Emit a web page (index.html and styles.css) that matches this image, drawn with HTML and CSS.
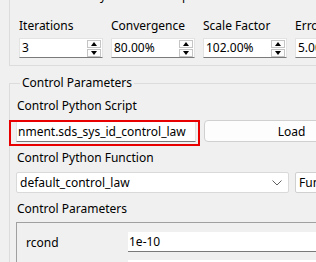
FILE: index.html
```html
<!DOCTYPE html>
<html lang="en">
<head>
    <meta charset="UTF-8">
    <title>Control Parameters</title>
    <link rel="stylesheet" href="styles.css">
</head>
<body>
    <div class="page">
        <fieldset class="group batch">
            <legend>Batch of Delayed Lines Computation</legend>
            <div class="spin-row">
                <div class="field">
                    <div class="label">Iterations</div>
                    <div class="spin"><span class="spin-value">3</span><span class="spin-btns"><span class="arrow up"></span><span class="arrow down"></span></span></div>
                </div>
                <div class="field">
                    <div class="label">Convergence</div>
                    <div class="spin"><span class="spin-value">80.00%</span><span class="spin-btns"><span class="arrow up"></span><span class="arrow down"></span></span></div>
                </div>
                <div class="field">
                    <div class="label">Scale Factor</div>
                    <div class="spin"><span class="spin-value">102.00%</span><span class="spin-btns"><span class="arrow up"></span><span class="arrow down"></span></span></div>
                </div>
                <div class="field">
                    <div class="label">Error Tolerance</div>
                    <div class="spin"><span class="spin-value">5.00%</span><span class="spin-btns"><span class="arrow up"></span><span class="arrow down"></span></span></div>
                </div>
            </div>
        </fieldset>

        <fieldset class="group control">
            <legend>Control Parameters</legend>

            <div class="label">Control Python Script</div>
            <div class="row">
                <div class="edit script-edit">
                    <span class="edit-text">nment.sds_sys_id_control_law</span>
                    <div class="highlight"></div>
                </div>
                <button class="btn load">Load</button>
            </div>

            <div class="label">Control Python Function</div>
            <div class="row combo-row">
                <div class="combo">
                    <span>default_control_law</span>
                    <svg class="chevron" width="10" height="6" viewBox="0 0 10 6"><polyline points="0.5,0.5 5,5 9.5,0.5" fill="none" stroke="#606060" stroke-width="1"/></svg>
                </div>
                <button class="btn fun">Function</button>
            </div>

            <div class="label">Control Parameters</div>
            <div class="param-frame">
                <div class="param">
                    <span class="param-name">rcond</span>
                    <div class="param-edit">1e-10</div>
                </div>
                <div class="param">
                    <span class="param-name">&nbsp;</span>
                    <div class="param-edit"></div>
                </div>
            </div>
        </fieldset>
    </div>
</body>
</html>
```

FILE: styles.css
```css
html, body {
    margin: 0;
    padding: 0;
    overflow: hidden;
}

body {
    background: #f0f0f0;
    font-family: 'Noto Sans', sans-serif;
    font-size: 12px;
    color: #000;
}

.page {
    width: 520px;
    margin-top: -12px;
    padding-left: 9px;
}

.group {
    margin: 0;
    border: 1px solid #dcdcdc;
    padding: 0 6px;
}

.group legend {
    margin-left: 4px;
    padding: 0 2px;
    line-height: 16px;
}

.label {
    line-height: 16px;
}

/* batch group */
.batch {
    padding-top: 14px;
    padding-bottom: 7px;
    padding-left: 9px;
}

.spin-row {
    display: flex;
    gap: 8px;
}

.field .label {
    margin-bottom: 4px;
}

.spin {
    width: 84px;
    height: 20px;
    box-sizing: border-box;
    background: #fff;
    border: 1px solid #e3e3e3;
    border-bottom-color: #7a7a7a;
    display: flex;
    align-items: center;
    justify-content: space-between;
}

.spin-value {
    padding-left: 2px;
    line-height: 16px;
}

.spin-btns {
    display: flex;
    flex-direction: column;
    gap: 1px;
    margin-right: 1px;
}

.arrow {
    width: 14px;
    height: 8px;
    box-sizing: border-box;
    border: 1px solid #c4c4c4;
    background: #fcfcfc;
    position: relative;
}

.arrow::after {
    content: "";
    position: absolute;
    left: 3px;
    border-left: 3px solid transparent;
    border-right: 3px solid transparent;
}

.arrow.up::after {
    top: 1px;
    border-bottom: 4px solid #000;
}

.arrow.down::after {
    top: 1px;
    border-top: 4px solid #000;
}

/* control group */
.control {
    margin-top: 9px;
    padding-top: 7px;
    padding-bottom: 40px;
}

.control .label {
    padding-left: 1px;
}

.row {
    display: flex;
    gap: 8px;
    margin-top: 6px;
    margin-bottom: 8px;
}

.edit {
    width: 180px;
    height: 22px;
    box-sizing: border-box;
    background: #fff;
    border: 1px solid #e3e3e3;
    border-bottom-color: #7a7a7a;
    display: flex;
    align-items: center;
    padding-left: 1px;
    white-space: nowrap;
    position: relative;
}

.highlight {
    position: absolute;
    left: -8px;
    top: -1px;
    right: -5px;
    bottom: -5px;
    border: 2px solid #e80000;
}

.btn {
    font-family: inherit;
    font-size: 12px;
    height: 22px;
    background: #fdfdfd;
    border: 1px solid #d0d0d0;
    border-radius: 4px;
    padding: 0;
}

.load {
    width: 175px;
}

.combo-row {
    gap: 6px;
    margin-top: 6px;
}

.combo {
    width: 273px;
    height: 21px;
    box-sizing: border-box;
    background: #fff;
    border: 1px solid #d9d9d9;
    border-radius: 2px;
    display: flex;
    align-items: center;
    justify-content: space-between;
    padding: 0 6px 0 3px;
}

.fun {
    width: 80px;
    height: 21px;
    border-radius: 2px;
    text-align: left;
    padding-left: 3px;
    background: #fff;
}

.param-frame {
    margin-top: 5px;
    border: 1px solid #a0a0a0;
    border-right: none;
    padding: 9px 0 0 9px;
}

.param {
    display: flex;
    align-items: center;
    margin-bottom: 8px;
}

.param-name {
    width: 102px;
}

.param-edit {
    flex: 1;
    height: 20px;
    box-sizing: border-box;
    background: #fff;
    border-bottom: 1px solid #7a7a7a;
    line-height: 19px;
    padding-left: 1px;
}
```
